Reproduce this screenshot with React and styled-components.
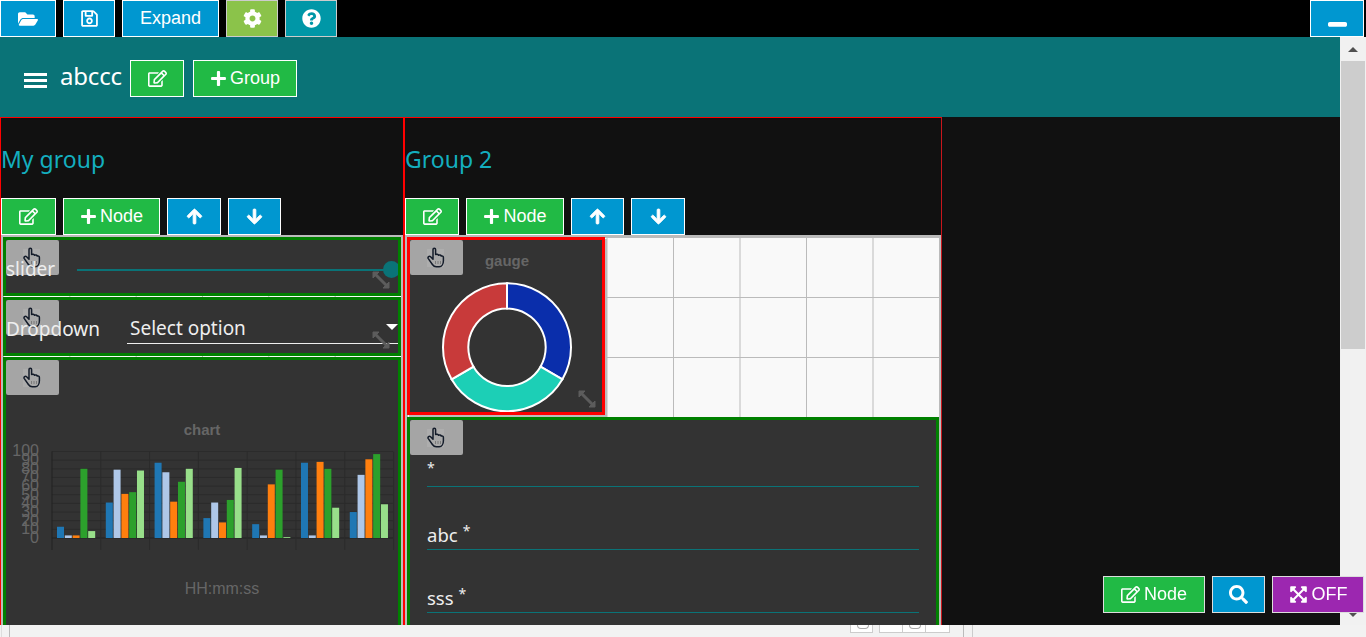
import React from "react";
import styled, { createGlobalStyle } from "styled-components";
import {
  FaFolderOpen,
  FaRegSave,
  FaCog,
  FaQuestionCircle,
  FaRegEdit,
  FaPlus,
  FaArrowUp,
  FaArrowDown,
  FaSearch,
  FaExpandArrowsAlt,
  FaWindowMinimize,
} from "react-icons/fa";

const BLUE = "#0097d0";
const GREEN = "#21ba45";
const TEAL = "#0a7377";
const LABEL_FONT = `"Noto Sans", "Open Sans", sans-serif`;

const GlobalStyle = createGlobalStyle`
  html, body {
    margin: 0;
    height: 100%;
    overflow: hidden;
    background: #f2f2f2;
    font-family: "Liberation Sans", Arial, sans-serif;
  }
`;

const Shell = styled.div`
  display: flex;
  flex-direction: column;
  width: 1366px;
  height: 637px;
  overflow: hidden;
`;

const Toolbar = styled.div`
  flex: none;
  display: flex;
  gap: 7px;
  height: 37px;
  padding-right: 2px;
  background: #000;
`;

const Button = styled.button`
  flex: none;
  display: inline-flex;
  align-items: center;
  justify-content: center;
  gap: ${(p) => p.$gap ?? 4}px;
  box-sizing: border-box;
  width: ${(p) => p.$w}px;
  height: 37px;
  padding: 0;
  margin-left: ${(p) => (p.$end ? "auto" : `${p.$ml || 0}px`)};
  border: 1px solid ${(p) => p.$line || "#fff"};
  background: ${(p) => p.$bg || BLUE};
  color: #fff;
  font-family: "Liberation Sans", Arial, sans-serif;
  font-size: 18px;
  svg {
    display: block;
    font-size: 19px;
  }
`;

const ArrowButton = styled(Button)`
  svg {
    font-size: 17px;
    stroke: currentColor;
    stroke-width: 28px;
  }
`;

const Body = styled.div`
  flex: none;
  display: flex;
  height: 588px;
`;

const Page = styled.div`
  flex: 1;
  min-width: 0;
  display: flex;
  flex-direction: column;
  overflow: hidden;
`;

const Header = styled.header`
  flex: none;
  display: flex;
  align-items: flex-start;
  box-sizing: border-box;
  height: 80px;
  padding: 23px 0 0 24px;
  background: ${TEAL};
`;

const Burger = styled.div`
  display: flex;
  flex-direction: column;
  gap: 3px;
  width: 23px;
  margin: 13px 13px 0 0;
  span {
    height: 3px;
    background: #fff;
  }
`;

const AppTitle = styled.h1`
  margin: 0 8px 0 0;
  width: 62px;
  color: #fff;
  font: 400 24px/32px ${LABEL_FONT};
  letter-spacing: -0.2px;
`;

const Main = styled.main`
  flex: 1;
  min-height: 0;
  display: flex;
  align-items: flex-start;
  background: #111;
  overflow: hidden;
`;

const Group = styled.section`
  flex: none;
  box-sizing: border-box;
  width: ${(p) => p.$w}px;
  border: 1px solid #f00;
  border-right-color: ${(p) => p.$edge || "#f00"};
  border-bottom: 0;
`;

const GroupTitle = styled.h2`
  display: flex;
  align-items: center;
  height: 82px;
  margin: 0 0 -2px;
  color: #14aebf;
  font: 400 23px/30px ${LABEL_FONT};
`;

const GroupTools = styled.div`
  display: flex;
  gap: 7px;
  height: 37px;
`;

const Cells = styled.div`
  display: grid;
  grid-template-columns: repeat(${(p) => p.$cols}, ${(p) => p.$cell}px);
  grid-auto-rows: 60px;
  border: 2px solid #bbb;
  border-bottom: 0;
  background-color: #f9f9f9;
  background-image: linear-gradient(to right, #bbb 1px, transparent 0),
    linear-gradient(to bottom, #bbb 1px, transparent 0);
  background-size: ${(p) => p.$cell}px 60px;
`;

const Widget = styled.article`
  position: relative;
  box-sizing: border-box;
  grid-column: 1 / -1;
  grid-row: span ${(p) => p.$rows || 1};
  height: ${(p) => p.$h}px;
  border: 3px solid ${(p) => p.$line || "#008000"};
  background: #333;
  overflow: hidden;
  color: #eee;
  font-family: ${LABEL_FONT};
`;

const GaugeWidget = styled(Widget)`
  grid-column: 1 / span 3;
  width: 198px;
  overflow: visible;
  box-shadow: 2px 2px 0 #bbb;
`;

const GripBadge = styled.div`
  position: absolute;
  top: 0;
  left: 0;
  display: flex;
  align-items: center;
  justify-content: center;
  width: 53px;
  height: 35px;
  padding-right: 2px;
  box-sizing: border-box;
  border-radius: 2px;
  background: #a5a5a5;
`;

const HandBack = styled.span`
  display: flex;
  align-items: center;
  justify-content: center;
  width: 17px;
  height: 18px;
  background: #adadad;
  svg {
    flex: none;
  }
`;

const ResizeMark = styled.svg`
  position: absolute;
  right: ${(p) => p.$right}px;
  bottom: 4px;
  width: 18px;
  height: 18px;
`;

const SliderRow = styled.div`
  display: flex;
  align-items: center;
  height: 53px;
  padding-top: 6px;
  box-sizing: border-box;
`;

const RowLabel = styled.label`
  position: relative;
  flex: none;
  width: ${(p) => p.$w}px;
  margin-bottom: ${(p) => p.$lift}px;
  box-sizing: border-box;
  font-size: 19px;
  line-height: 24px;
`;

const Track = styled.div`
  position: relative;
  flex: none;
  width: 315px;
  height: 2px;
  margin-top: 1px;
  background: ${TEAL};
`;

const Thumb = styled.span`
  position: absolute;
  right: -8px;
  top: -8px;
  width: 17px;
  height: 17px;
  border-radius: 50%;
  background: ${TEAL};
`;

const DropRow = styled.div`
  display: flex;
  align-items: flex-end;
  height: 44px;
`;

const SelectBox = styled.div`
  position: relative;
  flex: 1;
  box-sizing: border-box;
  height: 30px;
  padding-left: 3px;
  border-bottom: 1px solid #eee;
  font-size: 19px;
  line-height: 29px;
  &::after {
    content: "";
    position: absolute;
    right: 0;
    top: 10px;
    border-left: 6px solid transparent;
    border-right: 6px solid transparent;
    border-top: 6px solid #fff;
  }
`;

const FormBody = styled.div`
  padding: 4px 17px 0;
`;

const Field = styled.div`
  display: flex;
  align-items: flex-end;
  gap: 5px;
  box-sizing: border-box;
  height: 63px;
  padding-bottom: 1px;
  border-bottom: 1px solid ${TEAL};
  font-size: 18.500px;
  line-height: 26px;
`;

const Star = styled.sup`
  font-size: 14px;
  line-height: 26px;
  align-self: flex-end;
  margin-bottom: 4px;
  vertical-align: baseline;
`;

const Plot = styled.svg`
  display: block;
  width: 100%;
`;

const Dock = styled.div`
  position: fixed;
  right: 2px;
  bottom: 24px;
  display: flex;
  gap: 7px;
`;

const Scrollbar = styled.aside`
  flex: none;
  display: flex;
  flex-direction: column;
  align-items: center;
  box-sizing: border-box;
  width: 26px;
  padding: 0 1px;
  background: #f1f1f1;
`;

const ScrollArrow = styled.span`
  flex: none;
  width: 0;
  height: 0;
  margin: ${(p) => p.$m};
  border-left: 5px solid transparent;
  border-right: 5px solid transparent;
  ${(p) => (p.$down ? "border-top: 5px solid #505050;" : "border-bottom: 5px solid #505050;")}
`;

const ScrollThumb = styled.span`
  flex: none;
  width: 100%;
  height: 288px;
  margin-top: 9px;
  background: #cdcdcd;
`;

const ScrollGap = styled.span`
  flex: 1;
`;

const Strip = styled.footer`
  flex: none;
  display: flex;
  height: 12px;
  background: #f2f2f2;
`;

const StripLine = styled.span`
  flex: none;
  width: 1px;
  margin-left: ${(p) => p.$at}px;
  background: ${(p) => p.$c || "#bbb"};
`;

const StripBox = styled.span`
  flex: none;
  box-sizing: border-box;
  width: ${(p) => p.$w}px;
  height: 8px;
  margin-left: ${(p) => p.$at || 0}px;
  border: 1px solid #ccc;
  border-top: 0;
  border-left-width: ${(p) => (p.$join ? 0 : 1)}px;
  background: #fff;
`;

const StripSeal = styled(StripBox)`
  position: relative;
  &::before {
    content: "";
    position: absolute;
    left: 6px;
    top: 0;
    width: 10px;
    height: 3px;
    border: 1px solid #aaa;
    border-top: 0;
    border-radius: 0 0 4px 4px;
  }
`;

function Hand() {
  return (
    <HandBack>
      <svg width="18" height="21" viewBox="0 0 18 21">
        <path
          d="M6 2.600c0-1.700 2.600-1.700 2.600 0v5c1-.8 2.500-.5 2.900.6 1-.6 2.400-.2 2.700.9 1-.4 2.200.2 2.200 1.400v3.200c0 3.200-1.600 6.100-4.200 6.100H9.300c-1.900 0-3-1-3.900-2.300L1.300 11.600c-1-1.600 1-3 2.300-1.800L6 12.200z"
          fill="#a9a9a9"
          stroke="#141c2a"
          strokeWidth="1.500"
          strokeLinejoin="round"
        />
        <path d="M8.500 14v3M11 14v3M13.500 14v3" stroke="#7b7b7b" strokeWidth="1" />
      </svg>
    </HandBack>
  );
}

function Grip() {
  return (
    <GripBadge>
      <Hand />
    </GripBadge>
  );
}

function Resize({ right = 8 }) {
  return (
    <ResizeMark $right={right} viewBox="0 0 18 18">
      <path d="M3.500 3.500L14.500 14.500" stroke="#5c5c5c" strokeWidth="3" />
      <path d="M1 1h6L1 7zM17 17h-6L17 11z" fill="#5c5c5c" stroke="#5c5c5c" />
    </ResizeMark>
  );
}

const BAR_COLORS = ["#1f77b4", "#aec7e8", "#ff7f0e", "#2ca02c", "#98df8a"];
const BAR_VALUES = [
  [13, 3, 3, 80, 8],
  [41, 79, 51, 53, 78],
  [87, 76, 42, 65, 80],
  [23, 41, 18, 44, 81],
  [16, 3, 62, 79, 1],
  [87, 3, 88, 80, 35],
  [30, 73, 91, 97, 39],
];

function BarChart() {
  const base = 178;
  const unit = 0.865;
  const ticks = Array.from({ length: 11 }, (_, i) => i * 10);
  return (
    <Plot viewBox="0 0 392 265" height="265">
      <text x="196" y="75" textAnchor="middle" fontFamily="Liberation Sans" fontWeight="700" fontSize="15" fill="#666">
        chart
      </text>
      {ticks.map((t) => (
        <line key={t} x1="46" x2="387" y1={base - t * unit} y2={base - t * unit} stroke={t === 0 ? "#222" : "#2b2b2b"} />
      ))}
      {Array.from({ length: 8 }, (_, i) => (
        <line key={i} x1={46 + i * 48.8} x2={46 + i * 48.8} y1={base - 86.500} y2={base + 12} stroke={i === 0 ? "#222" : "#2b2b2b"} />
      ))}
      {ticks.map((t) => (
        <text key={t} x="33" y={base + 5 - t * unit} textAnchor="end" fontFamily="Liberation Sans" fontSize="16" fill="#666">
          {t}
        </text>
      ))}
      {BAR_VALUES.map((group, g) =>
        group.map((v, b) => (
          <rect
            key={`${g}-${b}`}
            x={51 + g * 48.800 + b * 7.800}
            y={base - v * unit}
            width="7"
            height={v * unit}
            fill={BAR_COLORS[b]}
          />
        ))
      )}
      <text x="216" y="234" textAnchor="middle" fontFamily="Liberation Sans" fontSize="16" fill="#666">
        HH:mm:ss
      </text>
    </Plot>
  );
}

// polar point, measured clockwise from twelve o'clock
function point(r, deg) {
  const a = (deg * Math.PI) / 180;
  return `${(97 + r * Math.sin(a)).toFixed(2)} ${(107.300 - r * Math.cos(a)).toFixed(2)}`;
}

function ringSlice(from, to) {
  const R = 64;
  const r = 38.700;
  return `M${point(R, from)}A${R} ${R} 0 0 1 ${point(R, to)}L${point(r, to)}A${r} ${r} 0 0 0 ${point(r, from)}Z`;
}

function Gauge() {
  return (
    <Plot viewBox="0 0 192 172" height="172">
      <text x="97" y="26" textAnchor="middle" fontFamily="Liberation Sans" fontWeight="700" fontSize="15" fill="#666">
        gauge
      </text>
      <path d={ringSlice(0, 120)} fill="#0a2eab" stroke="#fff" strokeWidth="2" />
      <path d={ringSlice(120, 240)} fill="#1ccfb6" stroke="#fff" strokeWidth="2" />
      <path d={ringSlice(240, 360)} fill="#c83a3a" stroke="#fff" strokeWidth="2" />
    </Plot>
  );
}

function GroupBar({ widths }) {
  return (
    <GroupTools>
      <Button $w={widths[0]} $bg={GREEN}>
        <FaRegEdit />
      </Button>
      <Button $w={widths[1]} $bg={GREEN} $gap={3}>
        <FaPlus size={17} />
        Node
      </Button>
      <ArrowButton $w={widths[2]}>
        <FaArrowUp />
      </ArrowButton>
      <ArrowButton $w={widths[3]}>
        <FaArrowDown />
      </ArrowButton>
    </GroupTools>
  );
}

export default function App() {
  return (
    <Shell>
      <GlobalStyle />
      <Toolbar>
        <Button $w={56}>
          <FaFolderOpen size={20} />
        </Button>
        <Button $w={52}>
          <FaRegSave />
        </Button>
        <Button $w={97}>Expand</Button>
        <Button $w={52} $bg="#8bc34a" $line="#ccc">
          <FaCog />
        </Button>
        <Button $w={52} $bg="#0097a7" $line="#ccc">
          <FaQuestionCircle />
        </Button>
        <Button $w={54} $end>
          <FaWindowMinimize />
        </Button>
      </Toolbar>
      <Body>
        <Page>
          <Header>
            <Burger>
              <span />
              <span />
              <span />
            </Burger>
            <AppTitle>abccc</AppTitle>
            <Button $w={54} $bg={GREEN}>
              <FaRegEdit />
            </Button>
            <Button $w={104} $bg={GREEN} $ml={9} $gap={3}>
              <FaPlus size={17} />
              Group
            </Button>
          </Header>
          <Main>
            <Group $w={404}>
              <GroupTitle>My group</GroupTitle>
              <GroupBar widths={[55, 97, 54, 53]} />
              <Cells $cols={6} $cell={66.333}>
                <Widget $h={59}>
                  <Grip />
                  <SliderRow>
                    <RowLabel $w={71} $lift={1}>
                      slider
                    </RowLabel>
                    <Track>
                      <Thumb />
                    </Track>
                  </SliderRow>
                  <Resize />
                </Widget>
                <Widget $h={59}>
                  <Grip />
                  <DropRow>
                    <RowLabel $w={121} $lift={3}>
                      Dropdown
                    </RowLabel>
                    <SelectBox>Select option</SelectBox>
                  </DropRow>
                  <Resize />
                </Widget>
                <Widget $h={280} $rows={5}>
                  <BarChart />
                  <Grip />
                </Widget>
              </Cells>
            </Group>
            <Group $w={538} $edge="#c8161c">
              <GroupTitle>Group 2</GroupTitle>
              <GroupBar widths={[54, 98, 53, 54]} />
              <Cells $cols={8} $cell={66.500}>
                <GaugeWidget $h={178} $rows={3} $line="#f00">
                  <Gauge />
                  <Grip />
                  <Resize right={6} />
                </GaugeWidget>
                <Widget $h={280} $rows={5}>
                  <FormBody>
                    <Field>
                      <Star>*</Star>
                    </Field>
                    <Field>
                      abc<Star>*</Star>
                    </Field>
                    <Field>
                      sss<Star>*</Star>
                    </Field>
                  </FormBody>
                  <Grip />
                </Widget>
              </Cells>
            </Group>
          </Main>
        </Page>
        <Scrollbar>
          <ScrollArrow $m="10px 0 0" />
          <ScrollThumb />
          <ScrollGap />
          <ScrollArrow $down $m="0 0 8px" />
        </Scrollbar>
      </Body>
      <Strip>
        <StripLine $at={1} $c="#ddd" />
        <StripLine $at={7} />
        <StripSeal $w={23} $at={840} />
        <StripBox $w={24} $at={6} />
        <StripSeal $w={23} $join />
        <StripBox $w={24} $join />
        <StripLine $at={13} />
        <StripLine $at={8} $c="#ccc" />
      </Strip>
      <Dock>
        <Button $w={102} $bg={GREEN} $line="#ddd">
          <FaRegEdit />
          Node
        </Button>
        <Button $w={53} $line="#ddd">
          <FaSearch />
        </Button>
        <Button $w={92} $bg="#9c27b0" $line="#ddd">
          <FaExpandArrowsAlt />
          OFF
        </Button>
      </Dock>
    </Shell>
  );
}
